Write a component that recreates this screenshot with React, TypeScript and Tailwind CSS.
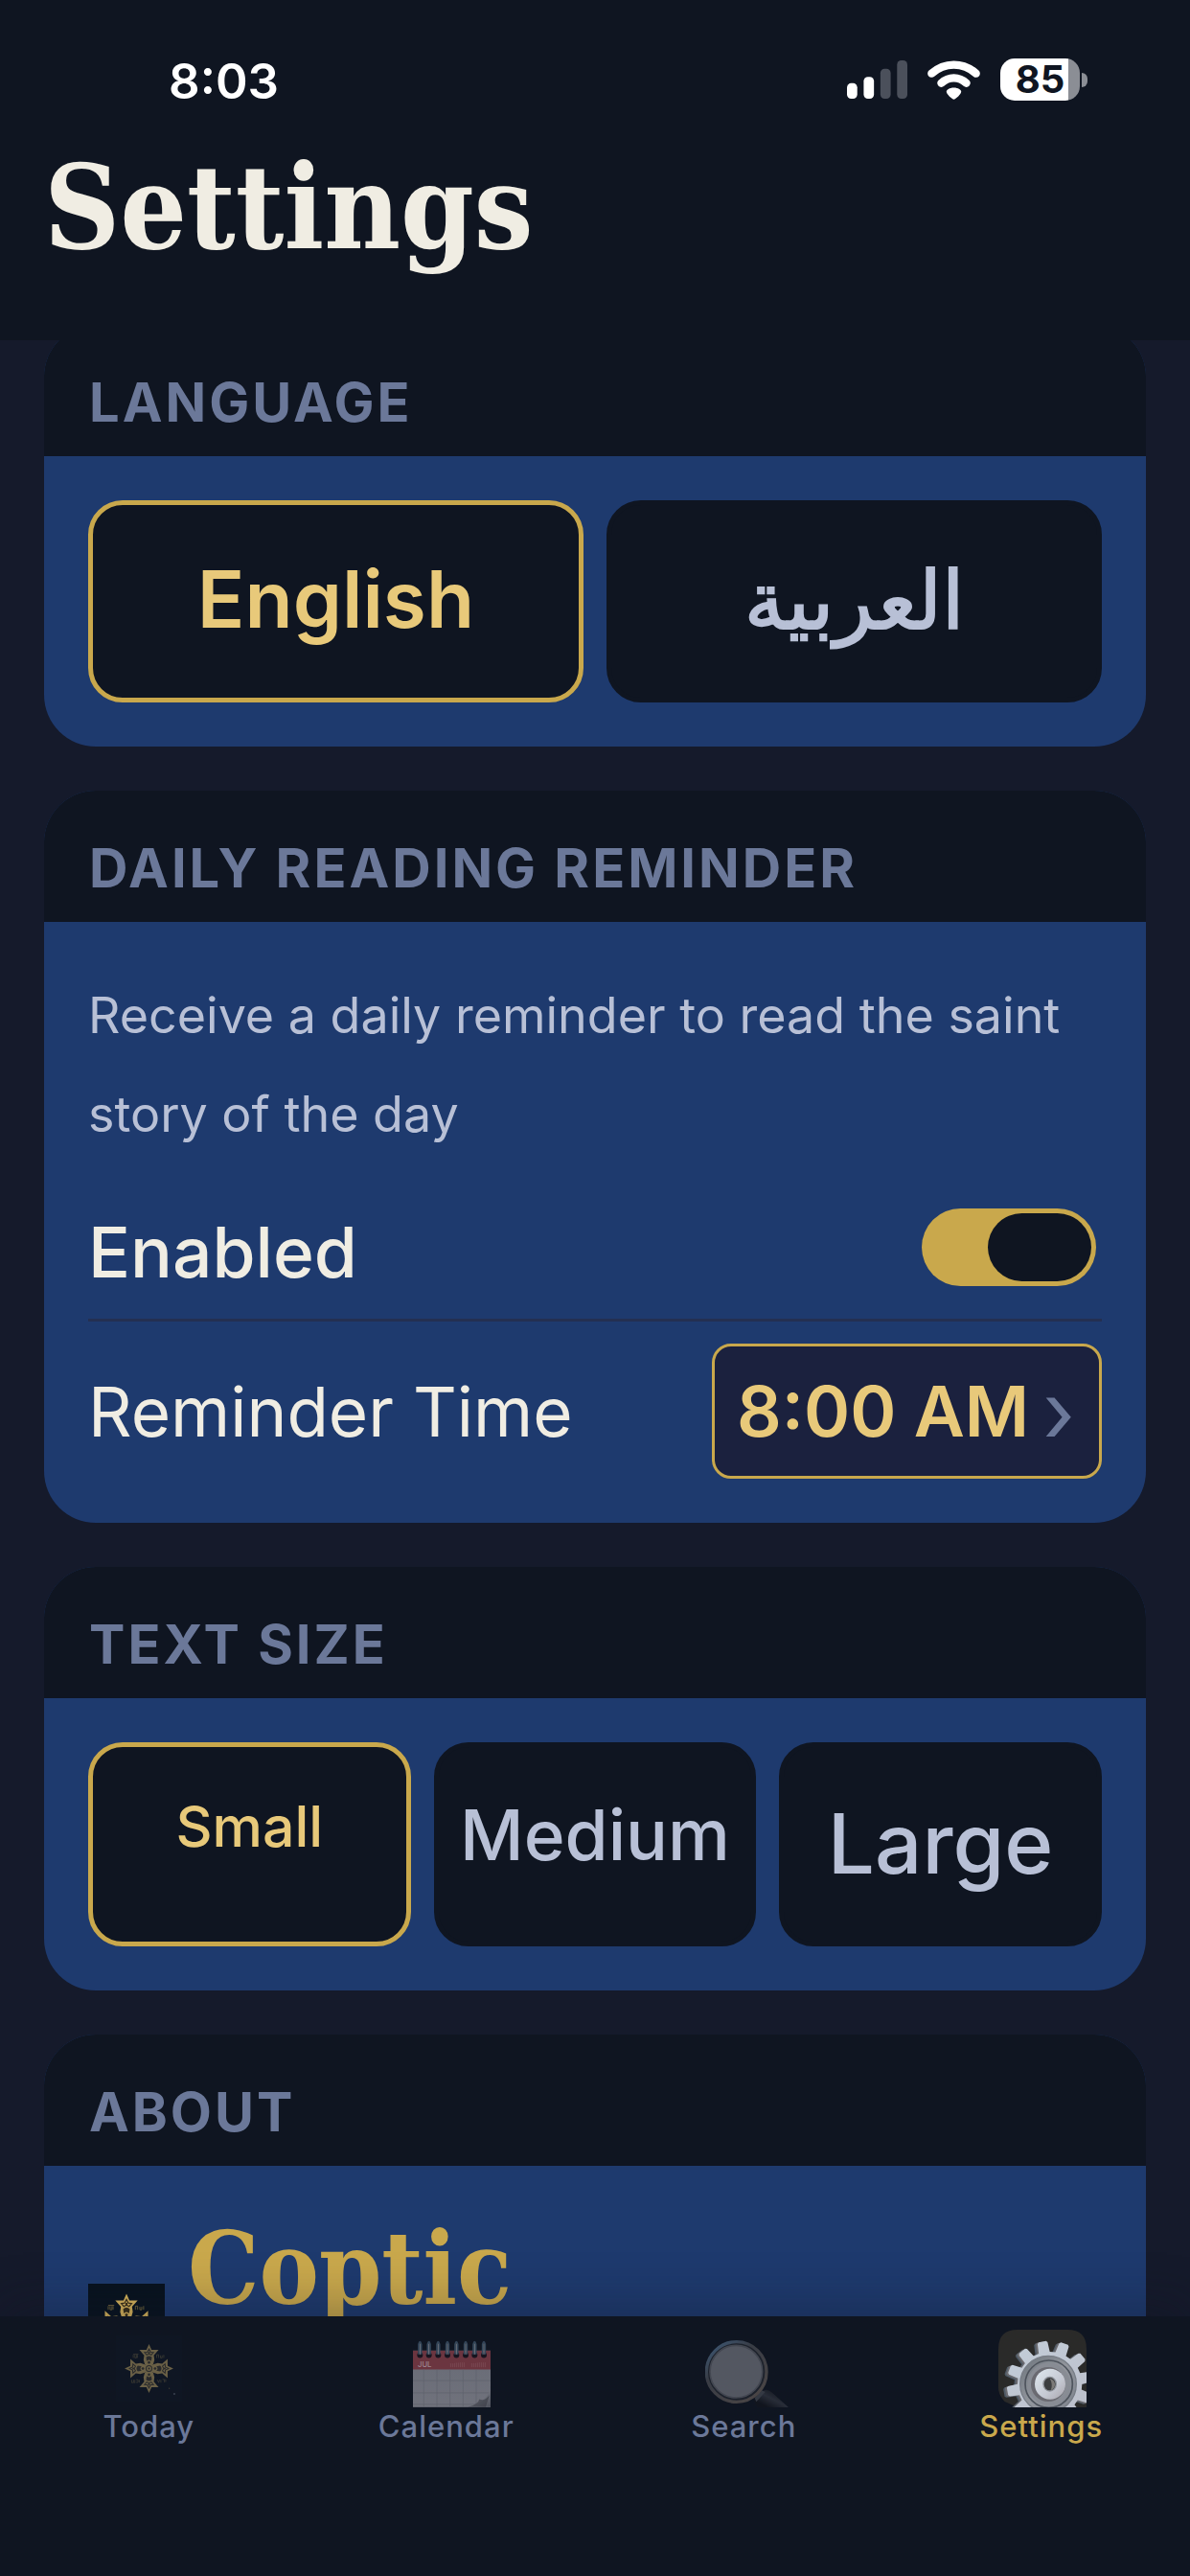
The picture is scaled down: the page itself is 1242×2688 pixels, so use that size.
import type { ReactNode } from "react";

const sans = "font-['Inter','DejaVu_Sans',sans-serif]";
const serif = "font-['DejaVu_Serif_Condensed','DejaVu_Serif',serif]";

function Signal() {
  return (
    <svg className="h-[40px] w-[63px]" viewBox="0 0 188 119" aria-label="Signal strength">
      <rect x="0" y="71" width="32" height="48" rx="13" fill="#fff" />
      <rect x="52" y="51" width="32" height="68" rx="13" fill="#fff" />
      <rect x="104" y="26" width="32" height="93" rx="13" fill="#4b505b" />
      <rect x="156" y="0" width="32" height="119" rx="13" fill="#4b505b" />
    </svg>
  );
}

function Wifi() {
  return (
    <svg className="h-[41px] w-[55px]" viewBox="0 0 164 121" aria-label="Wi-Fi">
      <g fill="none" stroke="#fff" strokeWidth="25" strokeLinecap="round">
        <path d="M13 40Q43 13 82 13Q121 13 151 40" />
        <path d="M43 70Q60 54 82 54Q104 54 121 70" />
      </g>
      <path d="M82 84C96 84 105 91 105 97C105 104 87 121 82 121C77 121 59 104 59 97C59 91 68 84 82 84Z" fill="#fff" />
    </svg>
  );
}

function CopticCross({ size, dim }: { size: string; dim?: boolean }) {
  const gold = dim ? "#6a6046" : "#d9b65c";
  const dark = dim ? "#292a2c" : "#3a301a";
  return (
    <svg className={size} viewBox="0 0 206 206" aria-hidden="true">
      <rect width="206" height="206" fill={dim ? "#0f1623" : "#08131f"} />
      {[0, 90, 180, 270].map((a) => (
        <g key={a} transform={`rotate(${a} 103 103)`}>
          <path
            d="M103 27L111 45L133 45L118 62L120 76L116 90L103 103L90 90L86 76L88 62L73 45L95 45Z"
            fill={gold}
          />
          <path d="M103 42L108 52L117 53L110 61L103 57L96 61L89 53L98 52Z" fill="none" stroke={dark} strokeWidth="3" />
          <circle cx="103" cy="54" r="3" fill={dark} />
          <path d="M94 68Q103 60 112 68L110 80Q103 72 96 80Z" fill={dark} />
          <circle cx="103" cy="84" r="4" fill={dark} />
        </g>
      ))}
      <rect x="92" y="92" width="22" height="22" fill={gold} />
      <circle cx="103" cy="103" r="9" fill="none" stroke={dark} strokeWidth="3" />
      <circle cx="103" cy="103" r="3" fill={dark} />
      <g fill="none" stroke={gold} strokeWidth="2" opacity="0.6">
        <path d="M54 60v10M59 60v10h5v-10M67 60v10M54 58h16" />
        <path d="M127 60v10M127 60h6v10M139 62v8h5v-8M149 60v10" />
        <path d="M49 138v9h6v-9M59 138v11M63 138h6v8h-6M73 138v9" />
        <path d="M129 138l4 9 3-9M140 138v9M145 137h6v9M155 136v9" />
      </g>
      <circle cx="166" cy="165" r="2" fill={gold} opacity="0.5" />
      <circle cx="182" cy="182" r="3" fill="#7a8196" opacity="0.4" />
    </svg>
  );
}

function CalendarIcon() {
  const rings = [22, 50, 79, 108, 136, 165, 193, 222];
  return (
    <svg className="h-[70px] w-[81px]" viewBox="0 0 243 209" aria-hidden="true">
      <defs>
        <linearGradient id="page" x1="0" y1="0" x2="0" y2="1">
          <stop offset="0" stopColor="#686b76" />
          <stop offset="1" stopColor="#70727c" />
        </linearGradient>
        <linearGradient id="curl" x1="0" y1="0" x2="1" y2="1">
          <stop offset="0.3" stopColor="#3f424c" />
          <stop offset="0.6" stopColor="#6e717b" />
          <stop offset="1" stopColor="#4b4e58" />
        </linearGradient>
      </defs>
      <rect x="0" y="32" width="243" height="177" fill="url(#page)" />
      <rect x="0" y="32" width="243" height="59" fill="#6b3540" />
      <path d="M34 91V209M75 91V209M116 91V209M157 91V209M198 91V209M0 126H243M0 164H243M0 200H243" stroke="#5f626d" strokeWidth="2" />
      <path d="M118 72V84M124 72V84M130 71V84M136 70V84M142 70V84M148 69V84M154 69V84M160 69V84M184 71V84M190 71V84M196 71V84M202 70V84M208 69V84M214 69V84M220 69V84M226 69V84" stroke="#81505b" strokeWidth="2" />
      <text x="15" y="84" fontSize="23" fill="#9b8690" fontFamily="Inter, sans-serif" fontWeight="500">JUL</text>
      <path d="M243 140C240 172 222 195 172 209H243Z" fill="url(#curl)" />
      <path d="M172 209Q205 200 208 184Q224 192 239 172L228 209Z" fill="#34373f" opacity="0.55" />
      {rings.map((x) => (
        <g key={x}>
          <ellipse cx={x} cy="46" rx="9" ry="9" fill="#171520" />
          <path d={`M${x - 4} 44V12Q${x} -4 ${x + 4} 12V44`} fill="none" stroke="#33465a" strokeWidth="5" />
          <path d={`M${x} 10V44`} stroke="#737a84" strokeWidth="3" />
        </g>
      ))}
    </svg>
  );
}

function SearchIcon() {
  return (
    <svg className="h-[70px] w-[87px]" viewBox="0 0 261 210" aria-hidden="true">
      <defs>
        <linearGradient id="rim" x1="0" y1="0" x2="0.8" y2="1">
          <stop offset="0" stopColor="#3d5a79" />
          <stop offset="0.4" stopColor="#383c45" />
          <stop offset="1" stopColor="#4a4545" />
        </linearGradient>
        <linearGradient id="handle" x1="0" y1="1" x2="1" y2="0">
          <stop offset="0.2" stopColor="#11151e" />
          <stop offset="0.5" stopColor="#282d38" />
          <stop offset="0.8" stopColor="#141821" />
        </linearGradient>
      </defs>
      <path d="M160 178L182 158Q195 150 208 163L261 210H164Q155 202 154 190Z" fill="url(#handle)" />
      <path d="M155 180L178 157L188 162L160 193Z" fill="#343943" />
      <circle cx="98" cy="99" r="94" fill="#1d222c" stroke="url(#rim)" strokeWidth="10" />
      <circle cx="97" cy="98" r="82" fill="#535761" stroke="#434751" strokeWidth="5" />
    </svg>
  );
}

function gearPath(cx: number, cy: number) {
  const pts: string[] = [];
  for (let i = 0; i < 12; i++) {
    const base = -100 + i * 30;
    const corners: [number, number][] = [
      [-10, 101],
      [-7, 131],
      [-5, 135],
      [5, 135],
      [7, 131],
      [10, 101],
    ];
    for (const [da, r] of corners) {
      const a = ((base + da) * Math.PI) / 180;
      pts.push(`${(cx + r * Math.cos(a)).toFixed(1)} ${(cy + r * Math.sin(a)).toFixed(1)}`);
    }
  }
  return `M${pts.join("L")}Z`;
}

function GearIcon() {
  return (
    <svg className="h-[81px] w-[92px]" viewBox="0 0 276 243" aria-hidden="true">
      <defs>
        <linearGradient id="gear" x1="0" y1="0" x2="0.6" y2="1">
          <stop offset="0" stopColor="#c3ced9" />
          <stop offset="1" stopColor="#bcbfcb" />
        </linearGradient>
        <linearGradient id="dish" x1="0" y1="0" x2="1" y2="1">
          <stop offset="0" stopColor="#6c747c" />
          <stop offset="0.5" stopColor="#92969d" />
          <stop offset="1" stopColor="#7d828c" />
        </linearGradient>
        <linearGradient id="hub" x1="0" y1="0" x2="1" y2="1">
          <stop offset="0" stopColor="#dfe8ef" />
          <stop offset="0.6" stopColor="#c5c9d3" />
          <stop offset="1" stopColor="#a9a6ad" />
        </linearGradient>
      </defs>
      <path d="M60 0H216Q276 0 276 60V243H60Q0 243 0 183V60Q0 0 60 0Z" fill="#2a2a29" />
      <path d="M20 243H60L20 225Q6 212 0 190V243Z" fill="#0f1521" />
      <path d={gearPath(150, 174)} fill="#4f5a66" />
      <path d={gearPath(155, 172)} fill="#6b6b70" />
      <path d={gearPath(161, 170)} fill="url(#gear)" />
      <circle cx="156" cy="170" r="88" fill="url(#dish)" stroke="#777d86" strokeWidth="4" />
      <circle cx="158" cy="170" r="74" fill="none" stroke="#4e545d" strokeWidth="5" />
      <circle cx="158" cy="170" r="66" fill="#888c94" />
      <circle cx="156" cy="171" r="54" fill="#6a6a71" />
      <circle cx="162" cy="170" r="48" fill="url(#hub)" />
      <ellipse cx="161" cy="170" rx="22" ry="24" fill="#8d9299" />
      <ellipse cx="161" cy="170" rx="18" ry="20" fill="#3b3d3f" />
      <path d="M161 152Q178 158 177 174Q174 187 164 190Q172 172 161 152Z" fill="#7c7a78" />
    </svg>
  );
}

function Card({ title, children }: { title: string; children: ReactNode }) {
  return (
    <section className="shrink-0 overflow-hidden rounded-[54px] bg-[#1e3a6e]">
      <h2 className="bg-[#0f1521] px-[47px] pt-[47px] pb-[22px] text-[56px] leading-[68px] font-bold tracking-[3px] text-[#6b7899]">
        {title}
      </h2>
      <div className="p-[46px]">{children}</div>
    </section>
  );
}

const option = "flex-1 rounded-[36px] border-[5px] bg-[#0f1521] text-center";
const chosen = "border-[#c9a84c] text-[#e8c97a]";
const idle = "border-[#0f1521] text-[#b8c0d6]";

function Tab({ label, active, children }: { label: string; active?: boolean; children: ReactNode }) {
  return (
    <a href={`#${label.toLowerCase()}`} className="flex flex-1 flex-col items-center" aria-current={active ? "page" : undefined}>
      <span className="flex h-[95px] items-end justify-center">{children}</span>
      <span className={`text-[31px] leading-[40px] font-medium tracking-[1px] ${active ? "text-[#c9a84c]" : "text-[#6b7899]"}`}>
        {label}
      </span>
    </a>
  );
}

export default function App() {
  return (
    <div className={`flex h-screen flex-col overflow-hidden bg-[#151a2b] ${sans}`}>
      <header className="relative z-10 shrink-0 bg-[#0f1521] pb-[67px]">
        <div className="flex h-[144px] items-start justify-between pt-[53px] pr-[107px] pl-[176px] text-white">
          <time className="text-[51px] leading-[64px] font-semibold">8:03</time>
          <div className="flex items-center gap-[21px] pt-[8px]">
            <Signal />
            <Wifi />
            <div className="flex items-center gap-[2px]">
              <div className="flex h-[44px] w-[83px] items-center justify-center rounded-[15px] bg-linear-to-r from-white from-85% to-[#8b8e95] to-85%">
                <span className="text-[40px] leading-[44px] font-bold text-[#0f1521]">85</span>
              </div>
              <div className="h-[15px] w-[6px] rounded-r-full bg-[#8b8e95]" />
            </div>
          </div>
        </div>
        <h1 className={`px-[46px] text-[122px] leading-[144px] font-bold text-[#f0ede3] ${serif}`}>Settings</h1>
      </header>

      <main className="min-h-0 flex-1 overflow-y-auto px-[46px] [scrollbar-width:none]">
        <div className="-mt-4 flex flex-col gap-[46px]">
          <Card title="LANGUAGE">
            <div className="flex gap-6">
              <button className={`${option} ${chosen} h-[211px] pb-1 text-[82px] font-semibold`}>English</button>
              <button lang="ar" className={`${option} ${idle} h-[211px] pb-1 text-[84px] font-medium [-webkit-text-stroke:2px]`}>العربية</button>
            </div>
          </Card>

          <Card title="DAILY READING REMINDER">
            <p className="text-[52px] leading-[103px] text-[#b8c0d6]">
              Receive a daily reminder to read the saint story of the day
            </p>
            <div className="flex h-[165px] items-center justify-between border-b-[3px] border-[#243052] pt-3">
              <label htmlFor="enabled" className="pt-3 text-[73px] leading-[90px] font-medium text-[#f0ede3]">
                Enabled
              </label>
              <input
                id="enabled"
                type="checkbox"
                role="switch"
                defaultChecked
                className="mr-[6px] flex h-[81px] w-[182px] appearance-none items-center justify-end rounded-full bg-[#c9a84c] px-[5px] before:h-[71px] before:w-[108px] before:rounded-full before:bg-[#0f1521]"
              />
            </div>
            <div className="flex items-center justify-between pt-[23px]">
              <span id="reminder-time" className="text-[71px] leading-[90px] text-[#f0ede3]">Reminder Time</span>
              <button
                aria-describedby="reminder-time"
                className="flex h-[141px] items-center gap-[14px] rounded-[20px] border-[3px] border-[#c9a84c] bg-[#1b213e] pr-[25px] pl-[23px] text-[73px] leading-[90px] font-semibold text-[#e8c97a]"
              >
                8:00 AM
                <span className="text-[88px] font-normal text-[#6b7899]">›</span>
              </button>
            </div>
          </Card>

          <Card title="TEXT SIZE">
            <div className="grid grid-cols-3 gap-6">
              <button className={`${option} ${chosen} flex h-[213px] items-start justify-center pt-[41px] text-[59px] leading-[84px] font-medium`}>Small</button>
              <button className={`${option} ${idle} flex h-[213px] items-start justify-center pt-[41px] text-[73px] leading-[102px] font-medium`}>Medium</button>
              <button className={`${option} ${idle} flex h-[213px] items-start justify-center pt-[41px] text-[87px] leading-[120px] font-medium`}>Large</button>
            </div>
          </Card>

          <Card title="ABOUT">
            <div className="flex h-[234px] items-center gap-[24px]">
              <CopticCross size="h-[80px] w-[80px]" />
              <h3 className={`self-start text-[104px] leading-[124px] font-bold text-[#c9a84c] ${serif}`}>Coptic</h3>
            </div>
          </Card>
        </div>
      </main>

      <nav className="relative z-10 flex h-[271px] shrink-0 bg-[#0f1521] shadow-[0_-12px_48px_rgba(15,21,33,0.3)]">
        <Tab label="Today">
          <span className="pb-[6px]">
            <CopticCross size="h-[69px] w-[69px]" dim />
          </span>
        </Tab>
        <Tab label="Calendar">
          <span className="pl-[12px]"><CalendarIcon /></span>
        </Tab>
        <Tab label="Search">
          <span className="pl-[6px]"><SearchIcon /></span>
        </Tab>
        <Tab label="Settings" active>
          <span className="pl-[3px]"><GearIcon /></span>
        </Tab>
      </nav>
    </div>
  );
}
